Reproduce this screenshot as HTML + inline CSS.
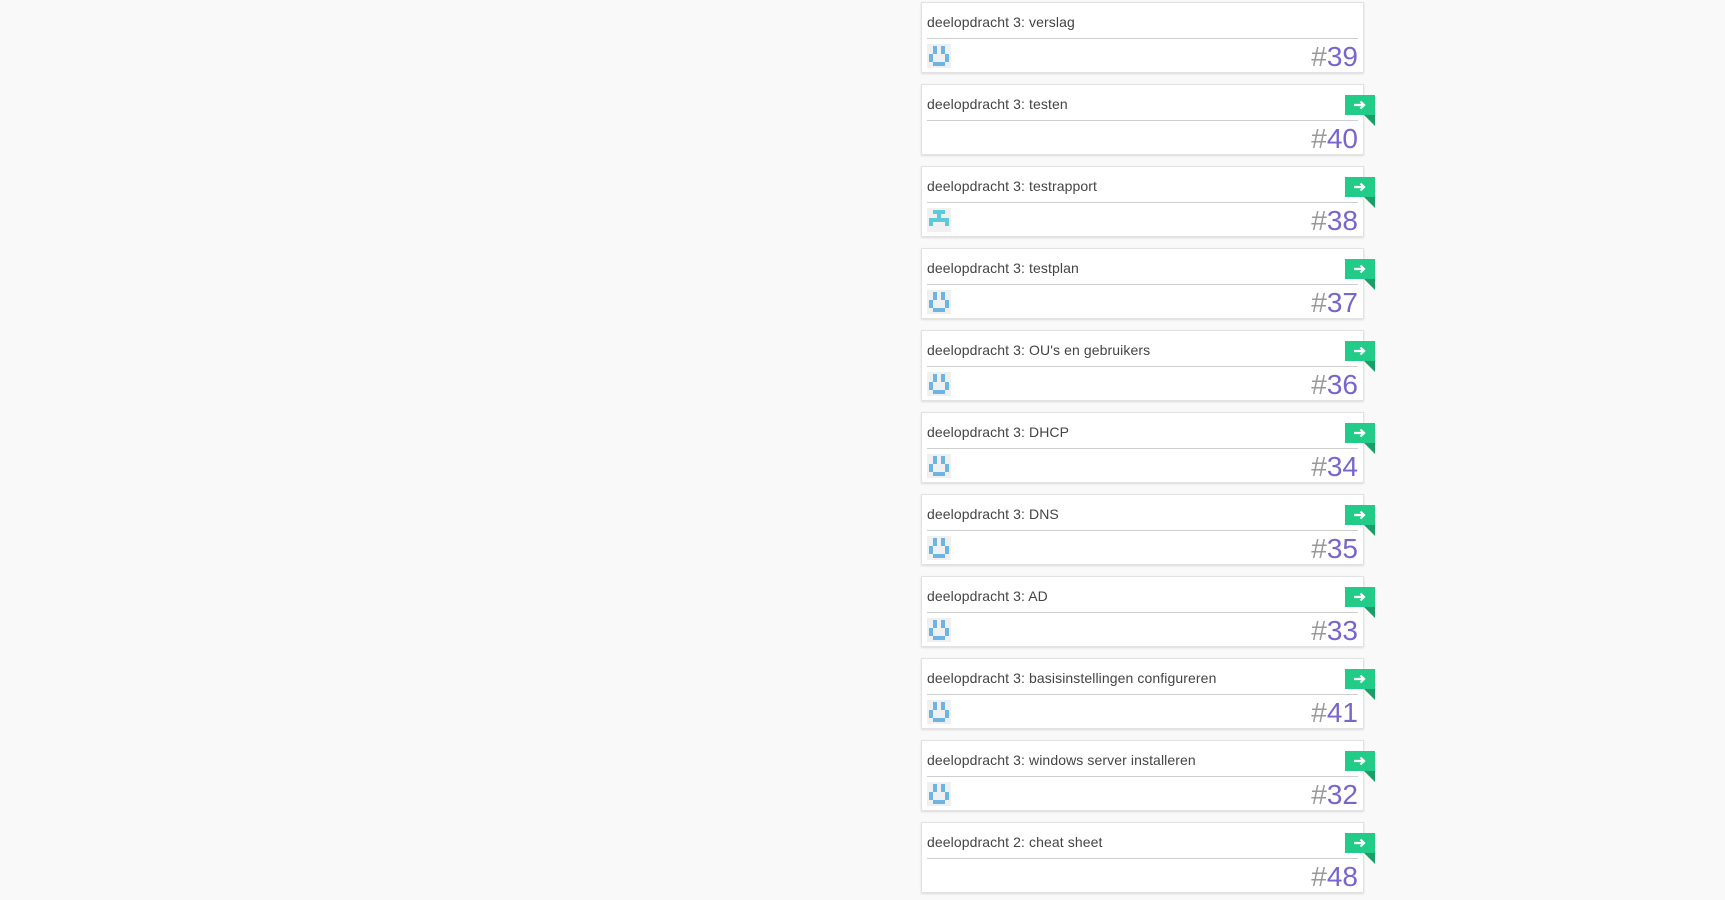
<!DOCTYPE html>
<html><head><meta charset="utf-8"><style>
html,body{margin:0;padding:0;width:1725px;height:900px;background:#f9f9f9;overflow:hidden;font-family:"Liberation Sans",sans-serif}
.card{position:absolute;left:921px;width:441px;height:69px;background:#fff;border:1px solid #e2e2e2;box-shadow:0 1px 2px rgba(0,0,0,.12)}
.t{position:absolute;left:5px;top:11px;font-size:14px;color:#444;letter-spacing:0.1px}
.ln{position:absolute;left:5px;right:5px;top:35px;border-top:1px solid #cfcfcf}
.n{position:absolute;right:5px;top:38px;font-size:28px;color:#7766cc;line-height:32px}
.n span{color:#999}
.av{position:absolute;left:5px;top:41px;width:24px;height:24px;background:#f0f0f0}
.av i{position:absolute;width:4px;height:4px}
.tag{position:absolute;left:423px;top:10px;width:30px;height:20px;background:#22cc88}
.tag svg{position:absolute;left:8px;top:5px}
.tag:after{content:"";position:absolute;right:0;top:20px;border-top:11px solid #1b9e6a;border-left:11px solid transparent}
</style></head><body>
<script>
var items=[["deelopdracht 3: verslag","39","u",0],["deelopdracht 3: testen","40","",1],["deelopdracht 3: testrapport","38","t",1],["deelopdracht 3: testplan","37","u",1],["deelopdracht 3: OU's en gebruikers","36","u",1],["deelopdracht 3: DHCP","34","u",1],["deelopdracht 3: DNS","35","u",1],["deelopdracht 3: AD","33","u",1],["deelopdracht 3: basisinstellingen configureren","41","u",1],["deelopdracht 3: windows server installeren","32","u",1],["deelopdracht 2: cheat sheet","48","",1]];
var pats={u:[".X.X.",".X.X.","X...X","X...X",".XXX."],t:[".XXX.","..X..","XXXXX","X...X","....."]};
var cols={u:"#6cb4e2",t:"#5ccad8"};
var h="";
items.forEach(function(it,i){
 h+='<div class="card" style="top:'+(2+82*i)+'px"><div class="t">'+it[0]+'</div><div class="ln"></div>';
 if(it[2]){h+='<div class="av">';pats[it[2]].forEach(function(r,y){for(var x=0;x<5;x++)if(r[x]=="X")h+='<i style="left:'+(2+x*4)+'px;top:'+(2+y*4)+'px;background:'+cols[it[2]]+'"></i>';});h+='</div>';}
 h+='<div class="n"><span>#</span>'+it[1]+'</div>';
 if(it[3])h+='<div class="tag"><svg width="13" height="10" viewBox="0 0 13 10"><path d="M1 5H11M7.5 1.5L11 5L7.5 8.5" stroke="#fff" stroke-width="2.2" fill="none"/></svg></div>';
 h+='</div>';
});
document.write(h);
</script>
</body></html>
